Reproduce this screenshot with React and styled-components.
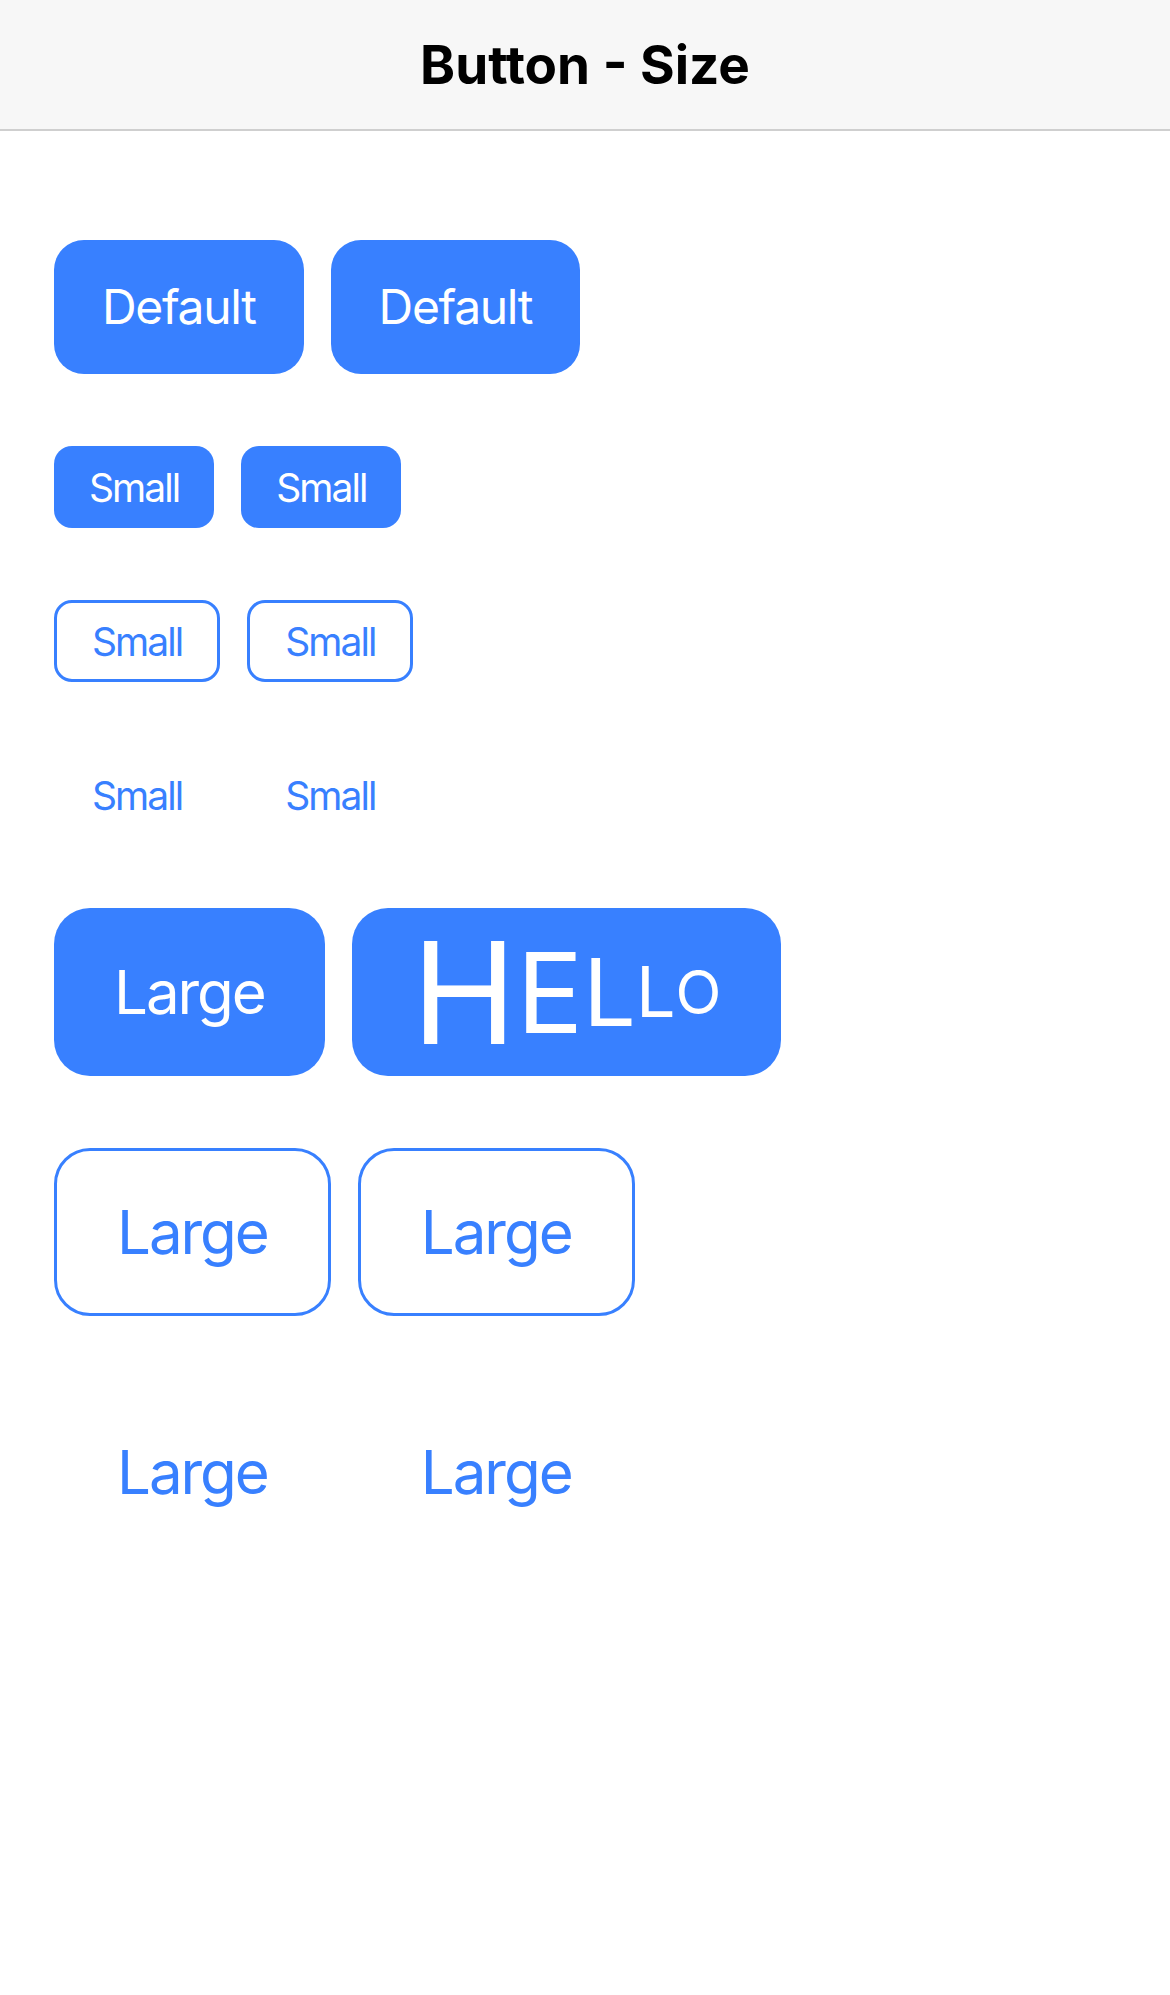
import React from "react";
import styled, { createGlobalStyle, css } from "styled-components";

const GlobalStyle = createGlobalStyle`
  html, body {
    margin: 0;
    padding: 0;
    background: #ffffff;
  }
  body {
    font-family: Inter, "Noto Sans", sans-serif;
    -webkit-font-smoothing: antialiased;
  }
`;

const primary = "#3880ff";

const sizes = {
  small: { font: 39, height: 82, pad: 35, radius: 18, track: -0.05 },
  default: { font: 48, height: 134, pad: 48, radius: 30, track: -0.028 },
  large: { font: 60, height: 168, pad: 60, radius: 36, track: -0.034 },
};

const Page = styled.div`
  width: 1170px;
  min-height: 1995px;
  background: #ffffff;
`;

const Toolbar = styled.header`
  height: 129px;
  background: #f7f7f7;
  border-bottom: 2px solid #cfcfcf;
  display: flex;
  align-items: center;
  justify-content: center;
`;

const Title = styled.h1`
  margin: 0;
  font-size: 53px;
  font-weight: 700;
  color: #000;
`;

const Content = styled.main`
  display: flex;
  flex-direction: column;
  gap: 72px;
  padding: 109px 0 0 54px;
`;

const Row = styled.div`
  display: flex;
  align-items: center;
  gap: 27px;
`;

const Button = styled.button`
  box-sizing: border-box;
  display: inline-flex;
  align-items: center;
  justify-content: center;
  margin: 0;
  height: ${(p) => sizes[p.$size].height}px;
  padding: 0 ${(p) => sizes[p.$size].pad}px;
  font-family: inherit;
  font-size: ${(p) => sizes[p.$size].font}px;
  font-weight: 400;
  line-height: 1;
  letter-spacing: ${(p) => sizes[p.$size].track}em;
  border-radius: ${(p) => sizes[p.$size].radius}px;
  cursor: pointer;

  ${(p) =>
    p.$fill === "solid" &&
    css`
      background: ${primary};
      color: #ffffff;
      border: none;
    `}

  ${(p) =>
    p.$fill === "outline" &&
    css`
      background: transparent;
      color: ${primary};
      border: 3px solid ${primary};
    `}

  ${(p) =>
    p.$fill === "clear" &&
    css`
      background: transparent;
      color: ${primary};
      border: 3px solid transparent;
    `}
`;

const Letter = styled.span`
  display: block;
  line-height: 1;
  letter-spacing: 0;
  font-size: ${(p) => p.$px}px;
`;

const hello = [
  ["H", 141],
  ["E", 111],
  ["L", 93],
  ["L", 70],
  ["O", 60],
];

export default function App() {
  return (
    <Page>
      <GlobalStyle />
      <Toolbar>
        <Title>Button - Size</Title>
      </Toolbar>
      <Content>
        <Row>
          <Button $fill="solid" $size="default">Default</Button>
          <Button $fill="solid" $size="default">Default</Button>
        </Row>
        <Row>
          <Button $fill="solid" $size="small">Small</Button>
          <Button $fill="solid" $size="small">Small</Button>
        </Row>
        <Row>
          <Button $fill="outline" $size="small">Small</Button>
          <Button $fill="outline" $size="small">Small</Button>
        </Row>
        <Row>
          <Button $fill="clear" $size="small">Small</Button>
          <Button $fill="clear" $size="small">Small</Button>
        </Row>
        <Row>
          <Button $fill="solid" $size="large">Large</Button>
          <Button $fill="solid" $size="large">
            {hello.map(([ch, px], i) => (
              <Letter key={i} $px={px}>{ch}</Letter>
            ))}
          </Button>
        </Row>
        <Row>
          <Button $fill="outline" $size="large">Large</Button>
          <Button $fill="outline" $size="large">Large</Button>
        </Row>
        <Row>
          <Button $fill="clear" $size="large">Large</Button>
          <Button $fill="clear" $size="large">Large</Button>
        </Row>
      </Content>
    </Page>
  );
}
